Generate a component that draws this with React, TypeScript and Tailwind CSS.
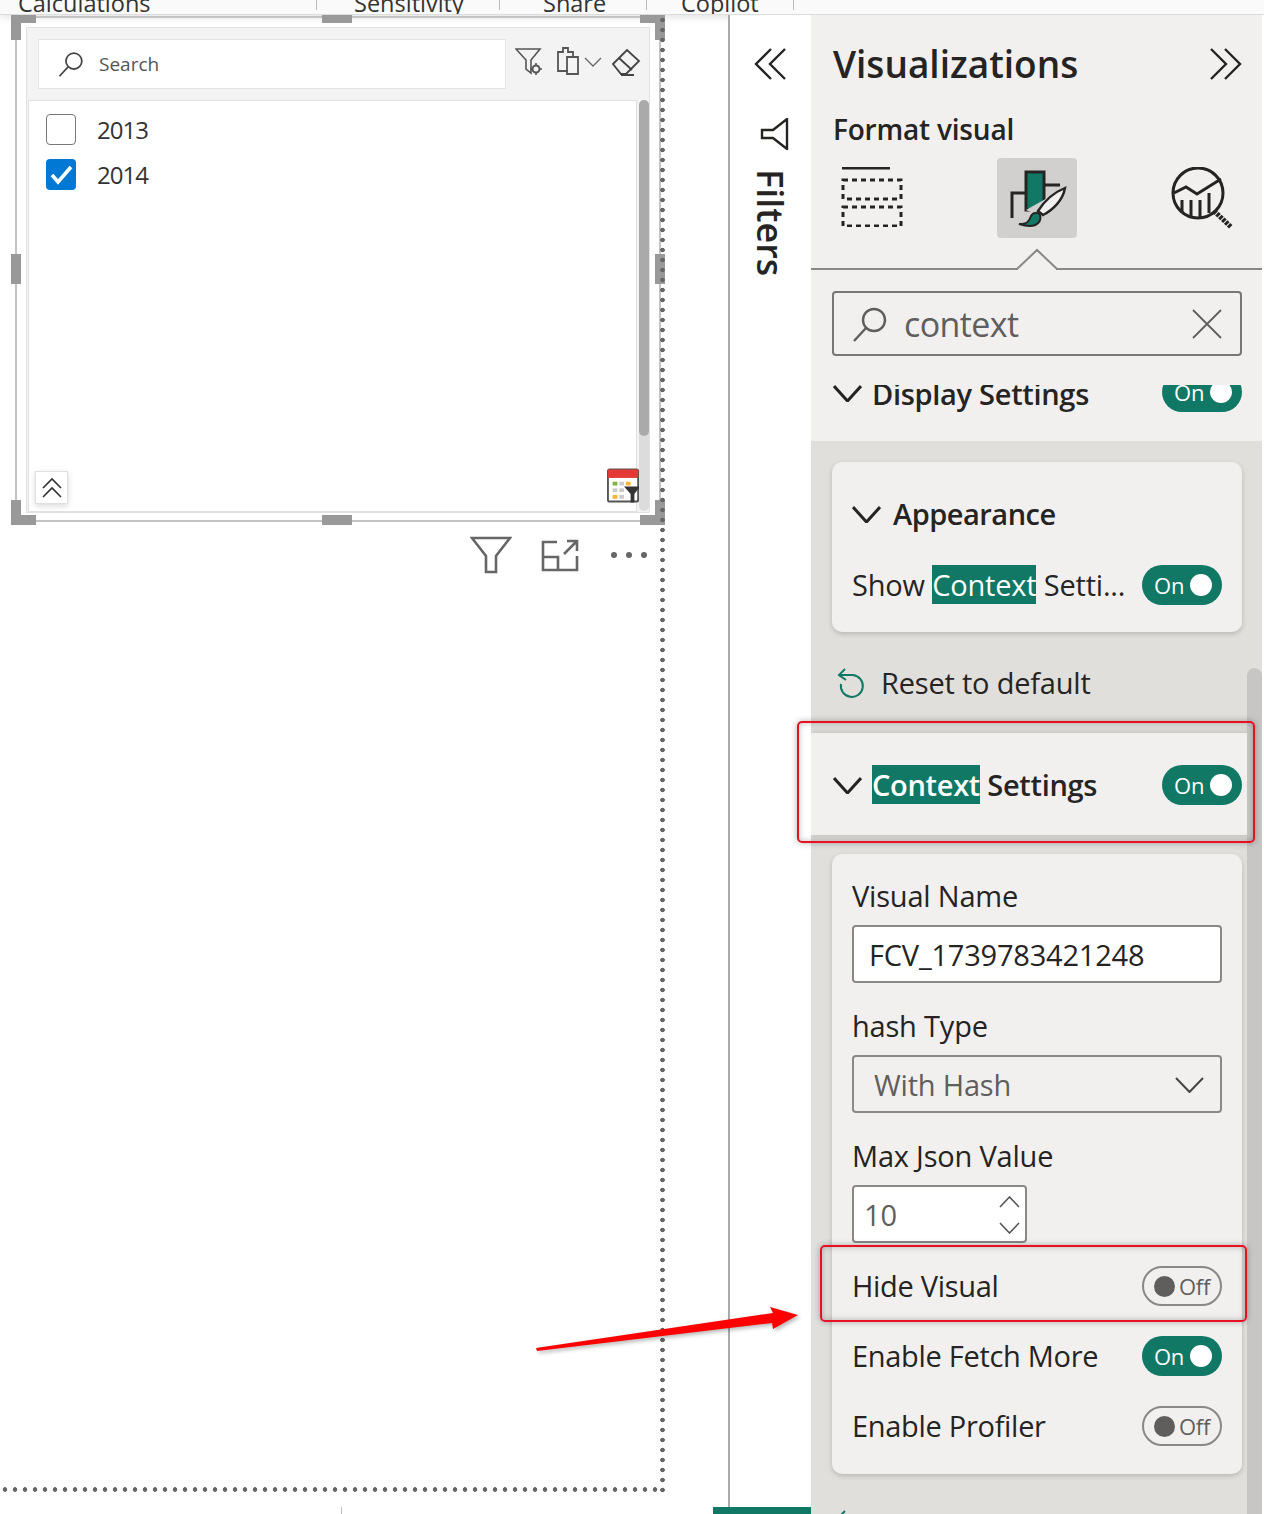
const ribbonTabs = [
  { label: "Calculations", width: "w-[317px]", pad: "pl-[18px]" },
  { label: "Sensitivity", width: "w-[183px]", pad: "pl-[37px]" },
  { label: "Share", width: "w-[147px]", pad: "pl-[43px]" },
  { label: "Copilot", width: "w-[147px]", pad: "pl-[34px]" },
];

function Chevron({ w, h, sw, color, up, className }: { w: number; h: number; sw: number; color: string; up?: boolean; className?: string }) {
  const d = up ? `M1 ${h - 1} ${w / 2} 1 ${w - 1} ${h - 1}` : `M1 1 ${w / 2} ${h - 1} ${w - 1} 1`;
  return (
    <svg className={className} width={w} height={h} viewBox={`0 0 ${w} ${h}`} fill="none" stroke={color} strokeWidth={sw}>
      <path d={d} />
    </svg>
  );
}

function DoubleChevron({ left }: { left?: boolean }) {
  return (
    <svg width="32" height="32" viewBox="0 0 32 32" fill="none" stroke="#252423" strokeWidth="2.4">
      <path d={left ? "M17 1 2 16l15 15M31 1 16 16l15 15" : "M1 1l15 15L1 31M15 1l15 15-15 15"} />
    </svg>
  );
}

function Toggle({ on }: { on: boolean }) {
  if (on) {
    return (
      <div className="flex h-10 w-20 shrink-0 items-center justify-between rounded-full bg-[#117865] pl-[12px] pr-[10px] text-[22px] leading-none text-white">
        <span>On</span>
        <span className="h-[22px] w-[22px] rounded-full bg-white" />
      </div>
    );
  }
  return (
    <div className="flex h-10 w-20 shrink-0 items-center gap-[4px] rounded-full border-2 border-[#8a8886] pl-[10px] text-[22px] leading-none text-[#605e5c]">
      <span className="h-[21px] w-[21px] rounded-full bg-[#605e5c]" />
      <span>Off</span>
    </div>
  );
}

function ResetRow() {
  return (
    <div className="flex h-[101px] shrink-0 items-center gap-[15px] pl-[25px] text-[29px] tracking-[-0.2px] text-[#252423]">
      <svg width="30" height="32" viewBox="0 0 30 32" fill="none" stroke="#117865" strokeWidth="2">
        <path d="M9 2 3 8l7 5" />
        <path d="M4 8h13a11 11 0 1 1-12 9" />
      </svg>
      <span>Reset to default</span>
    </div>
  );
}

function Label({ children }: { children: string }) {
  return <div className="flex h-[30px] items-center text-[29px] tracking-[-0.2px] text-[#252423]">{children}</div>;
}

function ToggleRow({ label, on }: { label: string; on: boolean }) {
  return (
    <div className="flex h-[70px] items-center justify-between text-[29px] tracking-[-0.3px] text-[#252423]">
      <span>{label}</span>
      <Toggle on={on} />
    </div>
  );
}

function SearchGlass({ size, color }: { size: number; color: string }) {
  return (
    <svg width={size} height={size} viewBox="0 0 36 36" fill="none" stroke={color} strokeWidth="2.4">
      <circle cx="22" cy="14" r="11" />
      <path d="M14 22 2 35" />
    </svg>
  );
}

function SlicerVisual() {
  return (
    <div className="absolute left-[11px] top-[15px] h-[510px] w-[654px]">
      {/* selection outline */}
      <div className="absolute inset-x-[4px] bottom-[3px] top-[1px] border-2 border-[#c4c4c4]" />
      {/* corners */}
      <div className="absolute left-0 top-0 h-[25px] w-[10px] bg-[#999]" />
      <div className="absolute left-0 top-0 h-[8px] w-[25px] bg-[#999]" />
      <div className="absolute right-0 top-0 h-[25px] w-[10px] bg-[#999]" />
      <div className="absolute right-0 top-0 h-[8px] w-[25px] bg-[#999]" />
      <div className="absolute bottom-0 left-0 h-[25px] w-[10px] bg-[#999]" />
      <div className="absolute bottom-0 left-0 h-[10px] w-[25px] bg-[#999]" />
      <div className="absolute bottom-0 right-0 h-[25px] w-[10px] bg-[#999]" />
      <div className="absolute bottom-0 right-0 h-[10px] w-[25px] bg-[#999]" />
      {/* mid handles */}
      <div className="absolute left-[311px] top-0 h-[8px] w-[30px] bg-[#999]" />
      <div className="absolute bottom-0 left-[311px] h-[10px] w-[30px] bg-[#999]" />
      <div className="absolute left-0 top-[239px] h-[30px] w-[10px] bg-[#999]" />
      <div className="absolute right-0 top-[239px] h-[30px] w-[10px] bg-[#999]" />

      {/* slicer */}
      <div className="absolute left-[15px] top-[12px] flex h-[486px] w-[624px] flex-col border border-[#e1e1e1] bg-[#f3f3f3]">
        <div className="flex h-[72px] shrink-0 items-center pl-[11px]">
          <div className="flex h-[50px] w-[468px] items-center gap-[15px] border border-[#e4e4e4] bg-white pl-[19px] text-[19px] text-[#555]">
            <SearchGlass size={26} color="#444" />
            <span>Search</span>
          </div>
          <div className="mb-[5px] flex items-center">
            <svg className="ml-[9px]" width="28" height="30" viewBox="0 0 28 30" fill="none" stroke="#555" strokeWidth="1.6">
              <path d="M1 2h24l-9 11v13l-5-4v-9z" />
              <circle cx="21" cy="22" r="3.5" strokeWidth="2" />
              <path d="M21 16v2M21 26v2M15 22h2M25 22h2" />
            </svg>
            <svg className="ml-[13px]" width="24" height="30" viewBox="0 0 24 30" fill="none" stroke="#555" strokeWidth="1.8">
              <path d="M12 24H2V5h5V1h5v4h5v5" />
              <path d="M11 10h11v17H11z" />
            </svg>
            <Chevron className="ml-[4px]" w={18} h={10} sw={1.3} color="#666" />
            <svg className="ml-[9px]" width="30" height="28" viewBox="0 0 30 28" fill="none" stroke="#444" strokeWidth="1.8">
              <path d="M2 16 16 2l12 11-13 13h-5z" />
              <path d="m8 10 13 12M10 27h13" />
            </svg>
          </div>
        </div>
        <div className="relative ml-[1px] w-[609px] flex-1 border border-[#e1e1e1] bg-white">
          <div className="flex h-[44px] items-end gap-[21px] pl-[17px] text-[24px] leading-[31px] tracking-[-1px] text-[#333]">
            <span className="h-[31px] w-[30px] rounded-[4px] border border-[#777] bg-white" />
            <span>2013</span>
          </div>
          <div className="mt-[14px] flex h-[31px] items-center gap-[21px] pl-[17px] text-[24px] leading-[31px] tracking-[-1px] text-[#333]">
            <span className="flex h-[31px] w-[30px] items-center justify-center rounded-[4px] bg-[#0078d4]">
              <svg width="23" height="20" viewBox="0 0 23 20" fill="none" stroke="white" strokeWidth="3.6">
                <path d="m2 10 6 7L21 2" />
              </svg>
            </span>
            <span>2014</span>
          </div>
          <div className="absolute bottom-[7px] left-[6px] flex h-[33px] w-[33px] items-center justify-center border border-[#e0e0e0] bg-white shadow-[0_2px_6px_rgba(0,0,0,0.15)]">
            <svg width="20" height="22" viewBox="0 0 20 22" fill="none" stroke="#333" strokeWidth="1.6">
              <path d="M1 11 10 2l9 9M1 20l9-9 9 9" />
            </svg>
          </div>
          <svg className="absolute bottom-[8px] right-[-5px]" width="34" height="35" viewBox="0 0 36 36">
            <rect x="1" y="1" width="32" height="34" rx="2" fill="#fff" stroke="#555" strokeWidth="2" />
            <rect x="1" y="1" width="32" height="9" fill="#e53935" />
            <rect x="6" y="14" width="5" height="4" fill="#7cb342" />
            <rect x="13" y="14" width="5" height="4" fill="#ccc" />
            <rect x="20" y="14" width="5" height="4" fill="#f9b233" />
            <rect x="6" y="21" width="5" height="4" fill="#ccc" />
            <rect x="13" y="21" width="5" height="4" fill="#ccc" />
            <rect x="6" y="28" width="5" height="4" fill="#f9b233" />
            <rect x="13" y="28" width="5" height="4" fill="#ccc" />
            <path d="M18 19h17l-6 8v9h-4v-9z" fill="#333" />
          </svg>
        </div>
        {/* scrollbar */}
        <div className="absolute bottom-[1px] right-[0px] top-[72px] w-[10px] rounded-full bg-[#dcdcdc]">
          <div className="h-[336px] w-full rounded-full bg-[#aaa]" />
        </div>
      </div>
    </div>
  );
}

function VisualHeaderIcons() {
  return (
    <div className="absolute left-[470px] top-[536px] flex items-center">
      <svg width="42" height="38" viewBox="0 0 42 38" fill="none" stroke="#666" strokeWidth="2.6">
        <path d="M2 2h38L26 20v16h-10V20z" />
      </svg>
      <svg className="ml-[29px]" width="38" height="33" viewBox="0 0 38 33" fill="none" stroke="#666" strokeWidth="2.6">
        <path d="M16 3H2v28h34V17M2 18h15v13M23 15 36 2M26 2h10v10" />
      </svg>
      <div className="ml-[32px] flex gap-[9px]">
        <span className="h-[6px] w-[6px] rounded-full bg-[#666]" />
        <span className="h-[6px] w-[6px] rounded-full bg-[#666]" />
        <span className="h-[6px] w-[6px] rounded-full bg-[#666]" />
      </div>
    </div>
  );
}

function VisualizationsPane() {
  return (
    <aside className="flex h-full w-[451px] shrink-0 flex-col bg-[#f1f0ef] text-[#252423]">
      <div className="flex h-[97px] shrink-0 items-center justify-between pl-[22px] pr-[20px]">
        <h1 className="text-[37px] font-semibold">Visualizations</h1>
        <DoubleChevron />
      </div>
      <div className="flex h-[34px] shrink-0 items-center pl-[22px] text-[28px] font-semibold tracking-[-0.2px]">Format visual</div>

      {/* tabs */}
      <div className="relative h-[124px] shrink-0 border-b-2 border-[#8a8886]">
        <svg className="absolute left-[30px] top-[21px]" width="62" height="60" viewBox="0 0 62 60" fill="none" stroke="#252423" strokeWidth="3">
          <path d="M1 1h48" />
          <path d="M2 13h58v19H2zM2 40h58v19H2z" strokeDasharray="5 4" />
        </svg>
        <div className="absolute left-[186px] top-[12px] flex h-20 w-20 items-center justify-center rounded-[4px] bg-[#d2d0ce]">
          <svg width="60" height="60" viewBox="0 0 60 60" fill="none">
            <path d="M19 4h18v38H19z" fill="#117865" stroke="#252423" strokeWidth="3" />
            <path d="M5 50V25h14M37 17h16" stroke="#252423" strokeWidth="3" />
            <path d="M19 42 58 20 34 48z" fill="#d2d0ce" />
            <path d="M58 20C56 32 46 42 36 47l-5-4C38 32 48 24 58 20z" fill="#f1f0ef" stroke="#252423" strokeWidth="2.4" />
            <path d="M12 56c8 0 10-2 12-8 2-4 7-4 9-1 2 6-3 11-10 11-4 0-8-1-11-2z" fill="#117865" stroke="#252423" strokeWidth="2" />
          </svg>
        </div>
        <svg className="absolute left-[360px] top-[21px]" width="62" height="62" viewBox="0 0 62 62" fill="none" stroke="#252423" strokeWidth="3">
          <circle cx="27" cy="26" r="25" />
          <path d="M3 26 15 20l11 7 24-15" />
          <path d="M11 33v13M20 33v17M29 33v17M38 26v20" />
          <path d="M43 44 60 60" strokeWidth="5" strokeDasharray="3 1" />
        </svg>
        <svg className="absolute bottom-[-2px] left-[205px]" width="42" height="22" viewBox="0 0 42 22" fill="#f1f0ef" stroke="#8a8886" strokeWidth="2">
          <path d="M0 21h1L21 2l20 19h1" />
          <path d="M2 22h38" stroke="#f1f0ef" strokeWidth="2" />
        </svg>
      </div>

      {/* search */}
      <div className="ml-[21px] mr-[20px] mt-[21px] flex h-[65px] shrink-0 items-center rounded-[4px] border-2 border-[#777] pl-[18px] pr-[18px] text-[34px] text-[#605e5c]">
        <SearchGlass size={36} color="#605e5c" />
        <span className="ml-[16px] mt-[2px] flex-1 tracking-[-0.6px]">context</span>
        <svg width="30" height="30" viewBox="0 0 30 30" fill="none" stroke="#605e5c" strokeWidth="1.8">
          <path d="m1 1 28 28M29 1 1 29" />
        </svg>
      </div>

      {/* scrolled section list */}
      <div className="relative mt-[29px] flex-1 overflow-hidden">
        <div className="flex h-[56px] items-center overflow-hidden pl-[22px] pr-[20px]">
          <div className="mt-[-42px] flex w-full items-center justify-between">
            <div className="flex items-center gap-[10px] pt-[3px] text-[29px] font-semibold tracking-[-0.3px]">
              <Chevron w={29} h={17} sw={3} color="#252423" />
              <span>Display Settings</span>
            </div>
            <Toggle on />
          </div>
        </div>

        <div className="flex flex-col bg-[#e1dfdc] pb-[60px] pt-[21px]">
          <div className="ml-[21px] mr-[20px] h-[170px] rounded-[10px] bg-[#f1f0ef] px-[20px] shadow-[0_2px_5px_rgba(0,0,0,0.18)]">
            <div className="flex h-[104px] items-center gap-[12px] text-[29px] font-semibold tracking-[-0.5px]">
              <Chevron w={29} h={17} sw={3} color="#252423" />
              <span>Appearance</span>
            </div>
            <div className="mt-[-16px] flex h-[70px] items-center justify-between text-[29px] tracking-[-0.2px]">
              <span>
                Show <span className="bg-[#117865] text-white">Context</span> Setti...
              </span>
              <Toggle on />
            </div>
          </div>

          <ResetRow />

          <div className="flex h-[102px] shrink-0 items-center justify-between bg-[#f1f0ef] pl-[22px] pr-[20px] pt-[2px] shadow-[0_0_8px_rgba(0,0,0,0.18)]">
            <div className="flex items-center gap-[10px] text-[29px] font-semibold tracking-[-0.3px]">
              <Chevron w={29} h={17} sw={3} color="#252423" />
              <span>
                <span className="bg-[#117865] text-white">Context</span> Settings
              </span>
            </div>
            <Toggle on />
          </div>

          <div className="ml-[21px] mr-[20px] mt-[19px] h-[620px] rounded-[10px] bg-[#f1f0ef] px-[20px] pt-[27px] shadow-[0_2px_5px_rgba(0,0,0,0.18)]">
            <Label>Visual Name</Label>
            <div className="mt-[14px] flex h-[58px] items-center rounded-[4px] border-2 border-[#8a8886] bg-white pl-[15px] pt-[2px] text-[29px] tracking-[-0.2px]">
              FCV_1739783421248
            </div>
            <div className="mt-[28px]">
              <Label>hash Type</Label>
            </div>
            <div className="mt-[14px] flex h-[58px] items-center justify-between rounded-[4px] border-2 border-[#8a8886] pl-[20px] pr-[16px] pt-[2px] text-[29px] tracking-[-0.2px] text-[#605e5c]">
              <span>With Hash</span>
              <Chevron w={29} h={16} sw={2} color="#444" />
            </div>
            <div className="mt-[28px]">
              <Label>Max Json Value</Label>
            </div>
            <div className="mt-[14px] flex h-[58px] w-[175px] items-center justify-between rounded-[4px] border-2 border-[#8a8886] bg-white pl-[10px] pr-[5px] pt-[1px] text-[29px] text-[#605e5c]">
              <span>10</span>
              <div className="flex flex-col gap-[14px]">
                <Chevron up w={21} h={12} sw={1.6} color="#555" />
                <Chevron w={21} h={12} sw={1.6} color="#555" />
              </div>
            </div>
            <div className="mt-[8px]">
              <ToggleRow label="Hide Visual" on={false} />
              <ToggleRow label="Enable Fetch More" on />
              <ToggleRow label="Enable Profiler" on={false} />
            </div>
          </div>

          <ResetRow />
        </div>

        {/* panel scrollbar */}
        <div className="absolute bottom-0 right-0 top-[283px] w-[15px] rounded-t-full bg-[#c8c6c4]" />
      </div>
    </aside>
  );
}

export default function App() {
  return (
    <div className="relative flex h-[1514px] w-[1264px] flex-col overflow-hidden bg-white font-['Open_Sans',sans-serif]">
      {/* ribbon */}
      <div className="flex h-[15px] shrink-0 items-center overflow-hidden border-b border-[#ddd] bg-[#fafafa] text-[23.5px] leading-none text-[#333] shadow-[0_2px_8px_rgba(0,0,0,0.12)]">
        {ribbonTabs.map((tab) => (
          <div key={tab.label} className={`${tab.width} ${tab.pad} flex h-[10px] items-center self-start border-r border-[#bbb]`}>
            <span className="mt-[-2px] whitespace-nowrap">{tab.label}</span>
          </div>
        ))}
      </div>

      <div className="flex flex-1 overflow-hidden">
        {/* canvas */}
        <div className="w-[728px] shrink-0" />

        {/* filters strip */}
        <div className="relative flex w-[83px] shrink-0 flex-col items-center border-l-2 border-[#aaa] bg-white pr-[1px]">
          <div className="mt-[33px]">
            <DoubleChevron left />
          </div>
          <svg className="ml-[8px] mt-[38px]" width="29" height="32" viewBox="0 0 29 32" fill="none" stroke="#252423" strokeWidth="2.4">
            <path d="M27 1v30L13 20H2v-8h11z" />
          </svg>
          <div className="mt-[19px] text-[36px] font-semibold leading-none text-[#252423] [writing-mode:vertical-rl]">Filters</div>
          <div className="absolute bottom-0 left-[-17px] h-[7px] w-[98px] bg-[#117865]" />
        </div>

        <VisualizationsPane />
        <div className="w-[2px] shrink-0 bg-white" />
      </div>

      {/* canvas overlays */}
      <SlicerVisual />
      <VisualHeaderIcons />
      <div className="absolute left-[660px] top-[15px] h-[1477px] w-[5px] bg-[radial-gradient(circle,#666_2px,transparent_2.6px)] bg-[length:5px_10px]" />
      <div className="absolute left-0 top-[1487px] h-[5px] w-[664px] bg-[radial-gradient(circle,#666_2px,transparent_2.6px)] bg-[length:10px_5px]" />
      <div className="absolute left-[341px] top-[1507px] h-[7px] w-[1px] bg-[#bbb]" />

      {/* annotations */}
      <div className="absolute left-[797px] top-[721px] h-[122px] w-[458px] rounded-[5px] border-2 border-[#e81123] shadow-[0_0_6px_rgba(0,0,0,0.3),inset_0_0_6px_rgba(0,0,0,0.25)]" />
      <div className="absolute left-[820px] top-[1245px] h-[77px] w-[427px] rounded-[5px] border-2 border-[#e81123] shadow-[0_0_6px_rgba(0,0,0,0.3),inset_0_0_6px_rgba(0,0,0,0.25)]" />
      <svg className="absolute left-[530px] top-[1300px] drop-shadow-[2px_2px_2px_rgba(0,0,0,0.3)]" width="275" height="56" viewBox="530 1300 275 56">
        <polygon points="536,1348 773,1313 770,1307 798,1315 773,1329 772,1323 537,1351" fill="#ff0000" />
      </svg>
    </div>
  );
}
